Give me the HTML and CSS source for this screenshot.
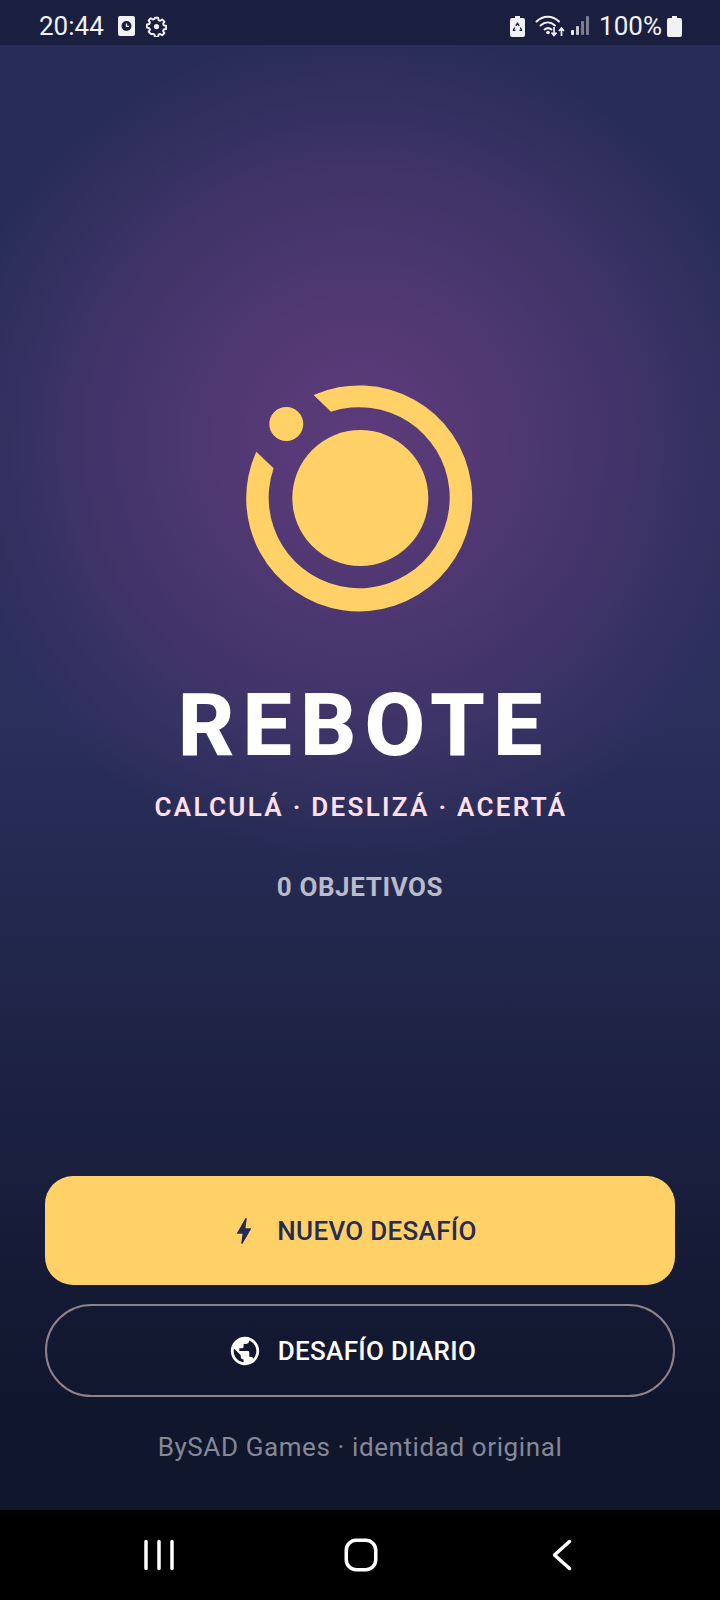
FILE: index.html
```html
<!DOCTYPE html>
<html lang="es">
<head>
<meta charset="utf-8">
<title>Rebote</title>
<link rel="stylesheet" href="styles.css">
</head>
<body>
<div class="screen">
  <header class="status">
    <div class="status-left">
      <span class="status-text">20:44</span>
      <svg class="ic-doc" width="17" height="20" viewBox="0 0 17 20"><path fill="#f2f2f5" d="M2 0h13a2 2 0 0 1 2 2v16a2 2 0 0 1-2 2H2a2 2 0 0 1-2-2V2a2 2 0 0 1 2-2z"/><circle cx="8.5" cy="10" r="5" fill="#1a1f3f"/><path d="M8.5 7.500V10.300h2.400" fill="none" stroke="#f2f2f5" stroke-width="1.200"/></svg>
      <svg class="ic-gear" width="21" height="21" viewBox="0 0 24 24"><path fill="none" stroke="#f2f2f5" stroke-width="2.200" stroke-linejoin="round" d="M10.200 2h3.600l.5 2.700 1.900.8 2.300-1.500 2.500 2.500-1.500 2.300.8 1.900 2.700.5v3.600l-2.700.5-.8 1.900 1.500 2.300-2.500 2.500-2.300-1.500-1.900.8-.5 2.700h-3.600l-.5-2.700-1.900-.8L5.500 20.500 3 18l1.500-2.300-.8-1.900-2.700-.5V9.700l2.700-.5.8-1.900L3 5l2.500-2.500 2.300 1.500 1.900-.8z"/><circle cx="12" cy="12" r="3" fill="#f2f2f5"/></svg>
    </div>
    <div class="status-right">
      <svg class="ic-recycle" width="15" height="21" viewBox="0 0 15 21"><path fill="#f2f2f5" d="M5 0h5v2h3a2 2 0 0 1 2 2v15a2 2 0 0 1-2 2H2a2 2 0 0 1-2-2V4a2 2 0 0 1 2-2h3z"/><path fill="none" stroke="#1a1f3f" stroke-width="1.300" stroke-linejoin="round" d="M5.800 9.800 7.500 7l1.700 2.800M10.200 11.500l1.500 2.800H9.500M5.500 14.300H3.300l1.400-2.800"/></svg>
      <svg class="ic-wifi" width="31" height="24" viewBox="0 0 31 24"><g fill="none" stroke="#f2f2f5" stroke-width="2" stroke-linecap="round"><path d="M1.500 7.500C8 1 17.500 1 24 7.500"/><path d="M5.500 11.500c4.500-4 10-4 14.500 0"/><path d="M9.500 15.500c2.500-2 4.500-2 7 0"/></g><circle cx="13" cy="18.500" r="1.800" fill="#f2f2f5"/><path d="M19 13v8M16.500 18.500l2.500 3 2.500-3M26.500 22v-7M24 17l2.500-3 2.500 3" fill="none" stroke="#f2f2f5" stroke-width="1.700"/></svg>
      <svg class="ic-signal" width="18" height="22" viewBox="0 0 18 22"><rect x="0" y="15" width="3" height="5" rx="1" fill="#f2f2f5"/><rect x="5" y="11" width="3" height="9" rx="1" fill="#c8c9d2"/><rect x="10" y="6" width="3" height="14" rx="1" fill="#7b7e92"/><rect x="15" y="1" width="3" height="19" rx="1" fill="#7b7e92"/></svg>
      <span class="status-text pct">100%</span>
      <svg class="ic-batt" width="15" height="21" viewBox="0 0 15 21"><path fill="#f2f2f5" d="M5 0h5v2h3a2 2 0 0 1 2 2v15a2 2 0 0 1-2 2H2a2 2 0 0 1-2-2V4a2 2 0 0 1 2-2h3z"/></svg>
    </div>
  </header>

  <main class="main">
    <svg class="logo" width="240" height="240" viewBox="239.700 378 240 240">
      <path fill="#ffd166" d="M313.300 395A113 113 0 1 1 256 451.700L273.300 468.300A90.500 90.500 0 1 0 330.700 411.700Z"/>
      <circle cx="360" cy="498" r="68" fill="#ffd166"/>
      <circle cx="286" cy="424" r="17" fill="#ffd166"/>
    </svg>
    <h1 class="title">REBOTE</h1>
    <p class="tagline">CALCULÁ · DESLIZÁ · ACERTÁ</p>
    <p class="score">0 OBJETIVOS</p>
    <div class="actions">
      <button class="btn btn-primary">
        <svg class="btn-icon" width="34" height="34" viewBox="0 0 24 24"><path fill="#262b55" d="M11 21h-1l1-7H7.500c-.58 0-.57-.32-.38-.66.19-.34.05-.08.07-.12C8.480 10.940 10.420 7.540 13 3h1l-1 7h3.500c.49 0 .56.330.470.510l-.070.150C12.960 17.550 11 21 11 21z"/></svg>
        <span>NUEVO DESAFÍO</span>
      </button>
      <button class="btn btn-outline">
        <svg class="btn-icon" width="34" height="34" viewBox="0 0 24 24"><path fill="#fff" d="M12 2C6.480 2 2 6.480 2 12s4.480 10 10 10 10-4.480 10-10S17.520 2 12 2zm-1 17.930c-3.950-.49-7-3.850-7-7.930 0-.62.080-1.210.210-1.790L9 15v1c0 1.100.9 2 2 2v1.930zm6.900-2.540c-.26-.81-1-1.390-1.900-1.390h-1v-3c0-.55-.45-1-1-1H8v-2h2c.55 0 1-.45 1-1V7h2c1.100 0 2-.9 2-2v-.41c2.930 1.190 5 4.060 5 7.410 0 2.080-.8 3.970-2.100 5.390z"/></svg>
        <span>DESAFÍO DIARIO</span>
      </button>
    </div>
    <p class="credit">BySAD Games · identidad original</p>
  </main>

  <nav class="nav">
    <svg width="34" height="34" viewBox="-2 0 34 34"><path d="M2 3.500v27M15 3.500v27M28 3.500v27" fill="none" stroke="#fff" stroke-width="3.500" stroke-linecap="round"/></svg>
    <svg width="34" height="34" viewBox="0 0 34 34"><rect x="2.250" y="2.250" width="29.500" height="29.500" rx="10" fill="none" stroke="#fff" stroke-width="3.500"/></svg>
    <svg width="34" height="34" viewBox="-6 0 34 34"><path d="M18.500 3.500 3.500 17l15 13.500" fill="none" stroke="#fff" stroke-width="3.500" stroke-linecap="round" stroke-linejoin="round"/></svg>
  </nav>
</div>
</body>
</html>
```

FILE: styles.css
```css
* { box-sizing: border-box; }

html, body {
  margin: 0;
  padding: 0;
}

body {
  font-family: Roboto, "Liberation Sans", sans-serif;
  background: #000;
}

.screen {
  width: 720px;
  height: 1600px;
  display: flex;
  flex-direction: column;
  background:
    radial-gradient(circle 420px at 360px 440px, #5c3b7a 0%, rgba(92, 59, 122, 0.85) 25%, rgba(92, 59, 122, 0.45) 65%, rgba(92, 59, 122, 0) 100%),
    linear-gradient(180deg, #262c56 0%, #2a2f5c 45%, #10162c 88%);
}

.status {
  height: 45px;
  flex: none;
  display: flex;
  align-items: center;
  justify-content: space-between;
  padding: 7px 38px 0 39px;
  background: #1a1f3f;
  color: #f2f2f5;
}

.status-left, .status-right {
  display: flex;
  align-items: center;
}

.status-text {
  font-size: 26px;
  line-height: 30px;
}

.ic-doc { margin-left: 14px; }
.ic-gear { margin-left: 11px; }
.ic-wifi { margin-left: 10px; }
.ic-signal { margin-left: 5px; }
.pct { margin-left: 10px; }
.ic-batt { margin-left: 5px; }

.main {
  flex: 1;
  display: flex;
  flex-direction: column;
  align-items: center;
  padding: 333px 45px 0;
}

.logo { display: block; flex: none; }

.title {
  margin: 55px 0 0;
  padding-left: 8px;
  font-size: 88px;
  line-height: 103px;
  font-weight: 800;
  letter-spacing: 8px;
  color: #fff;
}

.tagline {
  margin: 17px 0 0;
  padding-left: 2px;
  font-size: 26px;
  line-height: 28px;
  font-weight: 600;
  letter-spacing: 2.300px;
  color: #ffdfe9;
}

.score {
  margin: 52px 0 0;
  font-size: 26px;
  line-height: 28px;
  font-weight: 700;
  letter-spacing: 0.600px;
  color: #b9bbc9;
}

.actions {
  width: 630px;
  margin-top: 275px;
  display: flex;
  flex-direction: column;
  gap: 19px;
}

.btn {
  width: 100%;
  display: flex;
  align-items: center;
  justify-content: center;
  gap: 16px;
  font-family: inherit;
  font-size: 26px;
  font-weight: 500;
  letter-spacing: 0.300px;
  padding: 0 16px 0 0;
}

.btn-primary {
  height: 109px;
  border: 0;
  border-radius: 28px;
  background: #ffd166;
  color: #262b55;
}

.btn-outline {
  height: 93px;
  border: 2px solid #8e8189;
  border-radius: 47px;
  background: transparent;
  color: #fff;
}

.btn-icon { display: block; flex: none; }

.credit {
  margin: 35px 0 0;
  font-size: 26px;
  line-height: 30px;
  letter-spacing: 0.600px;
  color: #858898;
}

.nav {
  height: 90px;
  flex: none;
  background: #000;
  display: flex;
  align-items: center;
  justify-content: space-between;
  padding: 0 141px 0 142px;
}
```
